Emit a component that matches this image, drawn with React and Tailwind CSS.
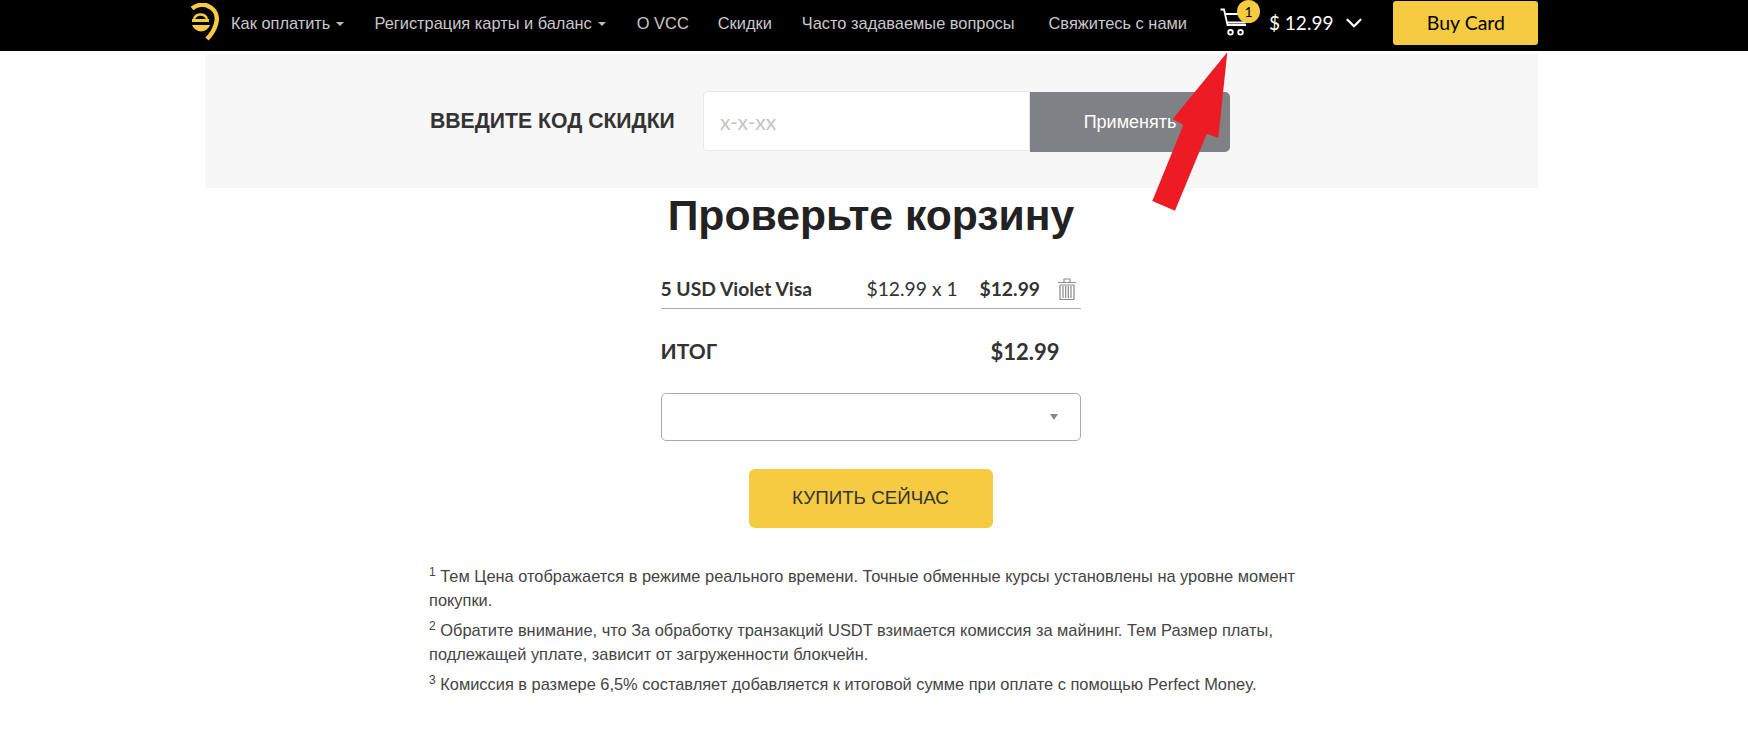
import React from 'react';
import { FiChevronDown } from 'react-icons/fi';

const Caret = () => (
  <span className="inline-block ml-[6px] align-middle border-x-[4px] border-x-transparent border-t-[4px] border-t-[#bbbbbb]"></span>
);

const Logo = () => (
  <svg width="32" height="42" viewBox="0 0 32 42" className="shrink-0 mt-[1px]">
    <path d="M3 5.5 C8 1.5 15 0.5 20 3.5 C27 7 29 14 27 21 C25 28 22 32 18 36" fill="none" stroke="#f5cb42" strokeWidth="4.5" />
    <path d="M5 16 C7 10 16 10 18 16" fill="none" stroke="#f5cb42" strokeWidth="2.5" />
    <path d="M3 16 H20 V19 H3 Z" fill="#f5cb42" />
    <path d="M3 22 H21 C18 30 7 31 3 22 Z" fill="#f5cb42" />
  </svg>
);

const Cart = () => (
  <svg width="28" height="36" viewBox="0 0 28 36" fill="none" stroke="#ffffff" strokeWidth="1.8">
    <path d="M0.5 9.5 H4 L7.5 25 H26" />
    <path d="M5 14 H27 L25 22.5 H6.5" />
    <circle cx="10.5" cy="32.3" r="2.3" />
    <circle cx="20.5" cy="32.3" r="2.3" />
  </svg>
);

const Trash = () => (
  <svg width="18" height="23" viewBox="0 0 18 23" fill="none" stroke="#8a8a8a" strokeWidth="1.2">
    <path d="M0 4.5 H18 M6 4 V1 H12 V4" />
    <path d="M2 7 V21.5 H16 V7 H2" />
    <path d="M5 8 V20 M7.7 8 V20 M10.3 8 V20 M13 8 V20" />
  </svg>
);

const App = () => {
  return (
    <div className="relative min-h-[731px] bg-white text-[#333333] font-['Lato','Liberation_Sans',sans-serif]">
      {/* Top nav */}
      <div className="h-[51px] pb-[5px] bg-black flex items-center pl-[189px]">
        <Logo />
        <nav className="flex items-center ml-[10px] text-[16.4px] text-[#c9c9c9] font-['Liberation_Sans',sans-serif]">
          <a className="mr-[30px]">Как оплатить<Caret /></a>
          <a className="mr-[31px]">Регистрация карты и баланс<Caret /></a>
          <a className="mr-[29px]">О VCC</a>
          <a className="mr-[30px]">Скидки</a>
          <a className="mr-[34px]">Часто задаваемые вопросы</a>
          <a>Свяжитесь с нами</a>
        </nav>
        <div className="relative self-start ml-[33px] w-[28px] h-[36px]">
          <Cart />
          <span className="absolute top-0 left-[17px] w-[23px] h-[23px] rounded-full bg-[#f5cb42] text-black text-[14px] flex items-center justify-center">1</span>
        </div>
        <span className="ml-[21px] text-[19px] text-white">$ 12.99</span>
        <FiChevronDown className="ml-[8px] text-white w-[26px] h-[26px]" />
        <button className="ml-[26px] w-[145px] h-[44px] rounded-[3px] bg-[#f5cb42] text-black text-[19.5px]">Buy Card</button>
      </div>

      {/* Discount */}
      <div className="mt-[3px] ml-[205px] w-[1333px] h-[134px] bg-[#f7f7f7] flex items-center pl-[225px]">
        <span className="w-[274px] text-[21.2px] font-bold text-[#333333] whitespace-nowrap font-['Liberation_Sans',sans-serif]">ВВЕДИТЕ КОД СКИДКИ</span>
        <div className="flex h-[60px] -ml-[1px]">
          <input
            placeholder="x-x-xx"
            className="w-[327px] h-[60px] px-[16px] bg-white border border-[#e8e8e8] rounded-l-[4px] text-[21px] placeholder:text-[#c4c4c4] outline-none"
          />
          <button className="w-[200px] h-[60px] mt-[1px] bg-[#808184] rounded-r-[5px] text-white text-[18px] font-['Liberation_Sans',sans-serif]">Применять</button>
        </div>
      </div>

      {/* Cart */}
      <div className="flex flex-col items-center">
        <h1 className="-mt-[3px] -ml-[6px] h-[60px] leading-[60px] text-[42.7px] font-bold text-[#222222] whitespace-nowrap font-['Liberation_Sans',sans-serif]">Проверьте корзину</h1>
        <div className="w-[420px] mt-[21px] -ml-[7px]">
          <div className="flex items-center h-[43px] pt-[4px] border-b border-[#aaaaaa] text-[19.3px]">
            <span className="w-[206px] font-bold whitespace-nowrap">5 USD Violet Visa</span>
            <span className="w-[113px] whitespace-nowrap">$12.99 x 1</span>
            <span className="w-[78px] font-bold">$12.99</span>
            <Trash />
          </div>
          <div className="flex items-center h-[84px] font-bold">
            <span className="w-[330px] text-[21px]">ИТОГ</span>
            <span className="text-[22px]">$12.99</span>
          </div>
          <div className="relative h-[48px] border border-[#aaaaaa] rounded-[5px]">
            <span className="absolute right-[22px] top-[20px] border-x-[4px] border-x-transparent border-t-[6px] border-t-[#888888]"></span>
          </div>
          <div className="flex justify-center mt-[28px]">
            <button className="w-[244px] h-[59px] rounded-[6px] bg-[#f5cb42] text-[18.8px] text-[#333333] font-['Liberation_Sans',sans-serif]">КУПИТЬ СЕЙЧАС</button>
          </div>
        </div>
      </div>

      {/* Notes */}
      <div className="ml-[429px] mt-[36px] w-[890px] text-[16.4px] leading-[24px] text-[#444444] font-['Liberation_Sans',sans-serif]">
        <p className="mb-[6px]"><sup className="text-[12px]">1</sup> Тем Цена отображается в режиме реального времени. Точные обменные курсы установлены на уровне момент покупки.</p>
        <p className="mb-[6px]"><sup className="text-[12px]">2</sup> Обратите внимание, что За обработку транзакций USDT взимается комиссия за майнинг. Тем Размер платы, подлежащей уплате, зависит от загруженности блокчейн.</p>
        <p><sup className="text-[12px]">3</sup> Комиссия в размере 6,5% составляет добавляется к итоговой сумме при оплате с помощью Perfect Money.</p>
      </div>

      {/* Annotation arrow on top of the screenshot */}
      <svg className="absolute left-[1150px] top-[50px]" width="90" height="170" viewBox="0 0 90 170">
        <polygon points="77.3,2.3 68.3,87.7 56.7,84 25,160.7 2.3,151 33.3,75 22.7,69" fill="#ed1c24" />
      </svg>
    </div>
  );
};

export default App;
